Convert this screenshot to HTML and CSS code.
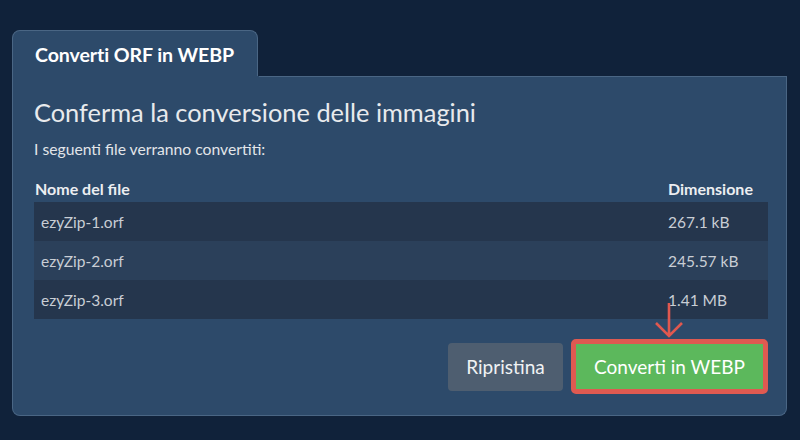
FILE: index.html
```html
<!DOCTYPE html>
<html lang="it">
<head>
<meta charset="utf-8">
<title>Converti ORF in WEBP</title>
<link rel="stylesheet" href="styles.css">
</head>
<body>
<div class="wrap">
  <div class="tab">Converti ORF in WEBP</div>
  <div class="panel">
    <h1 class="title">Conferma la conversione delle immagini</h1>
    <p class="sub">I seguenti file verranno convertiti:</p>
    <table class="files">
      <thead>
        <tr><th class="c-name">Nome del file</th><th class="c-size">Dimensione</th></tr>
      </thead>
      <tbody>
        <tr><td class="c-name">ezyZip-1.orf</td><td class="c-size">267.1 kB</td></tr>
        <tr><td class="c-name">ezyZip-2.orf</td><td class="c-size">245.57 kB</td></tr>
        <tr><td class="c-name">ezyZip-3.orf</td><td class="c-size">1.41 MB</td></tr>
      </tbody>
    </table>
    <div class="actions">
      <button class="btn btn-reset">Ripristina</button>
      <div class="hl">
        <svg class="arrow" width="32" height="38" viewBox="0 0 32 38"><path d="M16 1 V34 M3 21 L16 34 L29 21" fill="none" stroke="#e0584f" stroke-width="2.6"/></svg>
        <button class="btn btn-go">Converti in WEBP</button>
      </div>
    </div>
  </div>
</div>
</body>
</html>
```
FILE: styles.css
```css
html, body { margin: 0; padding: 0; }
body {
  width: 800px; height: 440px; overflow: hidden;
  background: #10223a;
  font-family: Lato, "Noto Sans", sans-serif;
  color: #e6e8eb;
}
.wrap { padding: 30px 0 0 12px; width: 775px; }
.tab {
  width: 246px; height: 46px; box-sizing: border-box;
  background: #2d4a6a;
  border: 1px solid #4a6684; border-bottom: none;
  border-radius: 8px 8px 0 0;
  padding: 12px 0 0 22px;
  font-weight: 700; font-size: 19.6px; color: #fff;
  letter-spacing: -0.1px;
  position: relative; z-index: 1;
}
.panel {
  background: #2d4a6a;
  border: 1px solid #4a6684; border-top: none;
  border-radius: 0 0 8px 8px;
  height: 340px; box-sizing: border-box;
  padding: 19px 20px 0 21px;
  position: relative;
}
.panel::before {
  content: ""; position: absolute; left: 246px; right: -1px; top: 0;
  border-top: 1px solid #4a6684;
}
.title { margin: 0; font-weight: 400; font-size: 25.4px; line-height: 34px; color: #e8eaed; }
.sub { margin: 10px 0 0; font-size: 15.7px; line-height: 21px; color: #e2e5e9; }
.files {
  margin-top: 18px; width: 734px; border-collapse: collapse;
  font-size: 15.5px;
}
.files th {
  text-align: left; font-weight: 700; color: #eceef1;
  padding: 0 0 4px; height: 20px; vertical-align: bottom;
  font-size: 16px;
}
.files th.c-name { padding-left: 1px; }
.files th.c-size { width: 100px; }
.files td { height: 39px; padding: 0; color: #c9ced5; }
.files td.c-name { padding-left: 7px; }
.files tbody tr:nth-child(odd) { background: #25364d; }
.files tbody tr:nth-child(even) { background: #2b405a; }
.actions {
  display: flex; justify-content: flex-end; align-items: center;
  gap: 8px; margin-top: 20px; width: 734px;
}
.btn {
  font-family: Lato, "Noto Sans", sans-serif; font-size: 19px; color: #fff;
  border: none; cursor: pointer;
}
.btn-reset {
  width: 115px; height: 48px; border-radius: 4px;
  background: #4e5e70; color: #f0f2f4;
}
.hl { position: relative; }
.arrow { position: absolute; left: 82px; top: -37px; }
.btn-go {
  display: block; width: 197px; height: 55px; box-sizing: border-box;
  background: #5cb85c; border: 5px solid #df5a51; border-radius: 5px;
}
```
